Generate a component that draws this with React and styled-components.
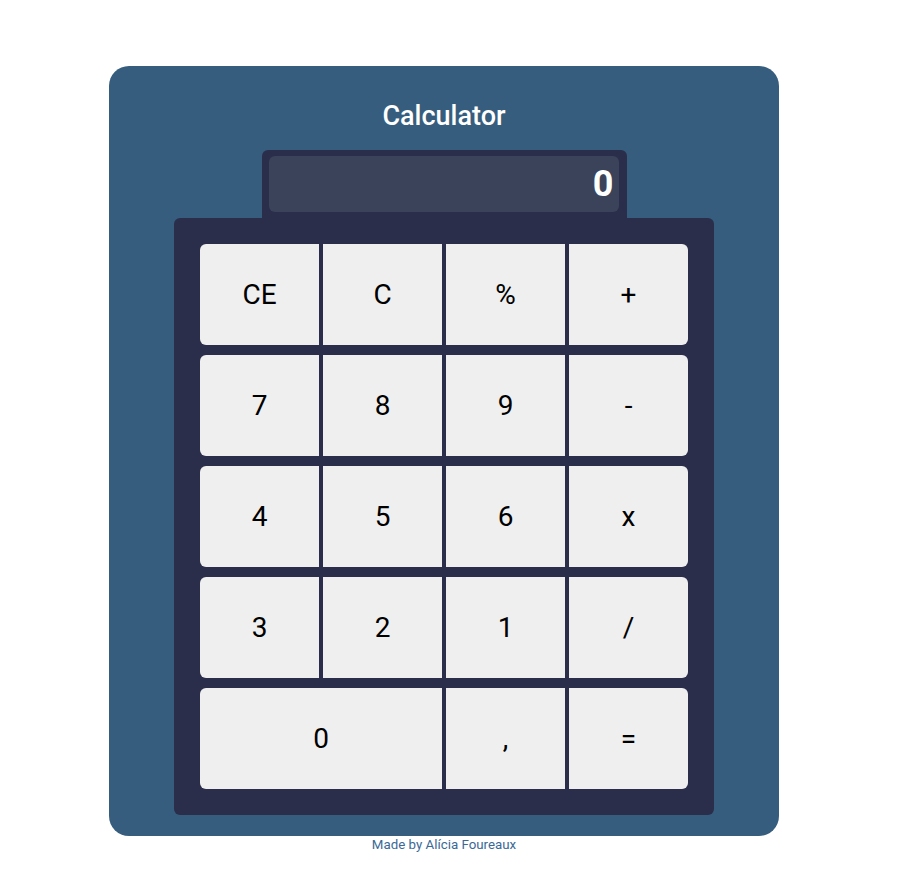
import styled, { createGlobalStyle } from "styled-components"

const GlobalStyle = createGlobalStyle`
  body {
    margin: 0;
    background: #fff;
    font-family: Roboto, "Liberation Sans", sans-serif;
  }
`

const Page = styled.div`
  padding: 66px 0 0 109px;
`

const Card = styled.div`
  width: 670px;
  height: 770px;
  box-sizing: border-box;
  background-color: #365d7e;
  border-radius: 20px;
  padding: 34px 65px 0;
  display: flex;
  flex-direction: column;
  align-items: center;
`

const Title = styled.h1`
  margin: 0 0 18px;
  font-size: 27px;
  line-height: 32px;
  font-weight: 500;
  color: #fff;
`

const Housing = styled.div`
  width: 365px;
  box-sizing: border-box;
  padding: 6px 8px 6px 7px;
  background-color: #2b2e4a;
  border-radius: 6px 6px 0 0;
`

const Screen = styled.div`
  height: 56px;
  box-sizing: border-box;
  background-color: #3a4359;
  border-radius: 6px;
  padding-right: 5px;
  display: flex;
  align-items: center;
  justify-content: flex-end;
  color: #fff;
  font-size: 36px;
  font-weight: 700;
`

const Keypad = styled.div`
  width: 540px;
  box-sizing: border-box;
  padding: 26px;
  background-color: #2b2e4a;
  border-radius: 6px;
  display: flex;
  flex-direction: column;
  gap: 10px;
`

const Row = styled.div`
  display: grid;
  grid-template-columns: repeat(4, 1fr);
  column-gap: 4px;
`

const Key = styled.button`
  grid-column: span ${(p) => p.$span || 1};
  height: 101px;
  border: none;
  padding: 0;
  background-color: #efefef;
  color: #000;
  font-family: Roboto, "Liberation Sans", sans-serif;
  font-size: 28px;
  cursor: pointer;

  &:first-child {
    border-radius: 6px 0 0 6px;
  }

  &:last-child {
    border-radius: 0 6px 6px 0;
  }

  &:hover {
    background-color: #e2e2e2;
  }
`

const Footer = styled.p`
  margin: 0;
  width: 670px;
  text-align: center;
  font-size: 13.3px;
  line-height: 17px;
  color: #3b6996;
`

const rows = [
  [["CE"], ["C"], ["%"], ["+"]],
  [["7"], ["8"], ["9"], ["-"]],
  [["4"], ["5"], ["6"], ["x"]],
  [["3"], ["2"], ["1"], ["/"]],
  [["0", 2], [","], ["="]],
]

const App = () => {
  return (
    <>
      <GlobalStyle />
      <Page>
        <Card>
          <Title>Calculator</Title>
          <Housing>
            <Screen>0</Screen>
          </Housing>
          <Keypad>
            {rows.map((row, i) => (
              <Row key={i}>
                {row.map(([label, span]) => (
                  <Key key={label} $span={span}>
                    {label}
                  </Key>
                ))}
              </Row>
            ))}
          </Keypad>
        </Card>
        <Footer>Made by Alícia Foureaux</Footer>
      </Page>
    </>
  )
}

export default App
